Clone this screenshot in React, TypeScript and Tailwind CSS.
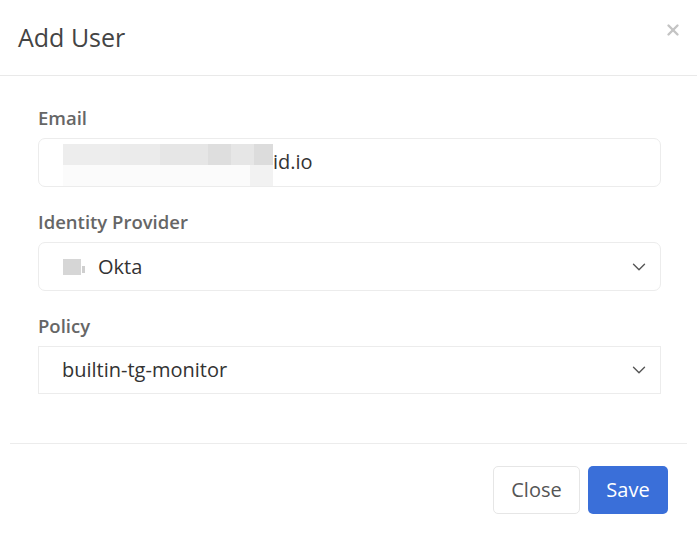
import { X, ChevronDown } from 'lucide-react'

// Add User modal — email / identity provider / policy
const font = { fontFamily: '"Open Sans", "Noto Sans", sans-serif' }

function Label({ children }: { children: React.ReactNode }) {
  return <div className="text-[18.5px] font-semibold leading-[22px] text-[#666]">{children}</div>
}

export default function App() {
  return (
    <div className="h-[545px] w-[697px] bg-white text-[#333]" style={font}>
      {/* Header */}
      <header className="flex h-[76px] items-start justify-between border-b border-[#e9e9e9] pl-[18px] pr-[15px]">
        <h1 className="mt-[21px] text-[25px] leading-[32px] text-[#444]">Add User</h1>
        <X className="mt-[21px] h-[18px] w-[18px] text-[#c4c4c4]" strokeWidth={3.2} />
      </header>

      {/* Body */}
      <div className="flex flex-col px-[38px] pt-[31px]">
        <Label>Email</Label>
        <div className="mt-[9px] flex h-[49px] w-[623px] items-center rounded-[7px] border border-[#ececec] pl-[24px] text-[20px]">
          <span className="flex h-full flex-col">
            <span className="mt-[5px] flex h-[21px]">
              <span className="w-[57px] bg-[#ededed]" />
              <span className="w-[40px] bg-[#ebebeb]" />
              <span className="w-[48px] bg-[#e6e6e6]" />
              <span className="w-[23px] bg-[#dedede]" />
              <span className="w-[23px] bg-[#e6e6e6]" />
              <span className="w-[19px] bg-[#dcdcdc]" />
            </span>
            <span className="flex h-[22px]">
              <span className="w-[187px] bg-[#fbfbfb]" />
              <span className="w-[23px] bg-[#f2f2f2]" />
            </span>
          </span>
          <span className="-mt-[2px]">id.io</span>
        </div>

        <div className="mt-[24px]">
          <Label>Identity Provider</Label>
        </div>
        <div className="mt-[9px] flex h-[49px] w-[623px] items-center justify-between rounded-[7px] border border-[#ececec] pl-[24px] pr-[10px] text-[20px]">
          <span className="flex items-center">
            <span className="mr-[1px] h-[16px] w-[18px] bg-[#d6d6d6]" />
            <span className="mr-[13px] mt-[6px] h-[7px] w-[3px] bg-[#cfcfcf]" />
            <span>Okta</span>
          </span>
          <ChevronDown className="h-[22px] w-[22px] text-[#555]" strokeWidth={1.5} />
        </div>

        <div className="mt-[24px]">
          <Label>Policy</Label>
        </div>
        <div className="mt-[9px] flex h-[48px] w-[623px] items-center justify-between border border-[#ececec] pl-[23px] pr-[10px] text-[20px]">
          <span>builtin-tg-monitor</span>
          <ChevronDown className="h-[22px] w-[22px] text-[#555]" strokeWidth={1.5} />
        </div>
      </div>

      {/* Footer */}
      <div className="mx-[10px] mt-[49px] border-t border-[#ececec]" />
      <div className="flex justify-end gap-[8px] pr-[29px] pt-[22px]">
        <button className="h-[48px] w-[87px] rounded-[5px] border border-[#e6e6e6] bg-white text-[20px] text-[#555]">
          Close
        </button>
        <button className="h-[48px] w-[80px] rounded-[5px] bg-[#3a6fd9] text-[20px] text-white">
          Save
        </button>
      </div>
    </div>
  )
}
